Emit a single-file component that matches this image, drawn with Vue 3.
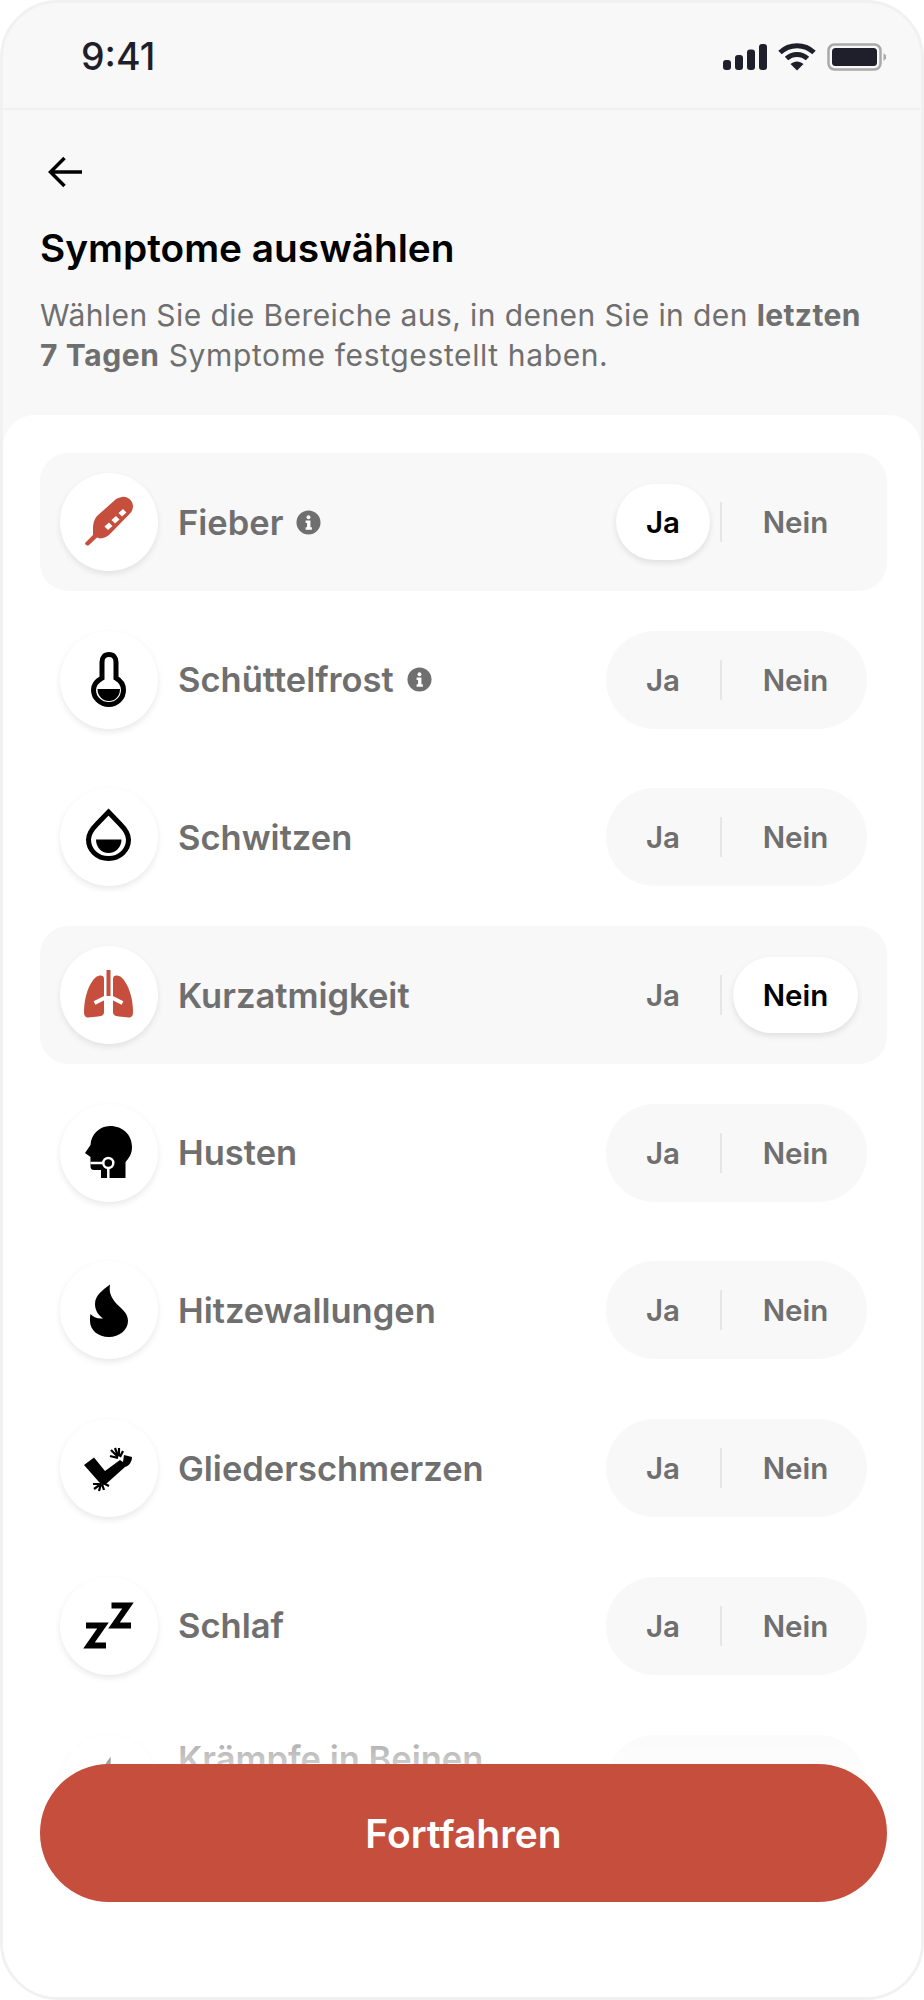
<template>
  <div class="screen">
    <header class="status">
      <span class="time">9:41</span>
      <div class="status-icons">
        <svg width="44" height="26" viewBox="0 0 44 26">
          <rect x="0" y="16" width="8" height="10" rx="3" />
          <rect x="12" y="11" width="8" height="15" rx="3" />
          <rect x="24" y="5.5" width="8" height="20.5" rx="3" />
          <rect x="36" y="0" width="8" height="26" rx="3" />
        </svg>
        <svg width="38" height="28" viewBox="0 0 38 28">
          <path d="M2 9.5C11.5 .5 26.5 .5 36 9.5" class="wifi" />
          <path d="M8.5 15.5C14.5 10 23.5 10 29.5 15.5" class="wifi" />
          <path d="M12.5 21L19 27.5L25.5 21C21.5 17.5 16.5 17.5 12.5 21Z" />
        </svg>
        <svg width="60" height="28" viewBox="0 0 60 28">
          <rect x="1.5" y="1.5" width="52" height="25" rx="6" fill="none" stroke="#a9a9ab" stroke-width="2.5" />
          <rect x="5" y="5" width="45" height="18" rx="3.5" />
          <path d="M56.5 10L59 12.5V15.5L56.5 18Z" fill="#a9a9ab" />
        </svg>
      </div>
    </header>

    <section class="intro">
      <svg class="back" width="36" height="32" viewBox="0 0 36 32">
        <path d="M34 16H3M16.5 2L2.5 16L16.5 30" />
      </svg>
      <h1>Symptome auswählen</h1>
      <p>
        <span class="line-one">Wählen Sie die Bereiche aus, in denen Sie in den <b>letzten</b></span>
        <span class="line-two"><b>7 Tagen</b> Symptome festgestellt haben.</span>
      </p>
    </section>

    <main class="sheet">
      <div
        v-for="item in symptoms"
        :key="item.label"
        :class="['row', { answered: item.answer }]"
      >
        <span class="bubble">
          <svg width="60" height="60" viewBox="0 0 60 60" :class="item.answer ? 'accent' : 'plain'">
            <template v-if="item.icon === 'fever'">
              <path d="M43 5C48.5 4 54 9 54 14C54 17 53 19.5 51 21.5L32 41C29 44 25 46.5 21 46.5L18 45.5L10 53C8 54.5 5 52.5 6.5 50.5L14 43V36C14 31.5 15 27.5 18 24L36 8C38 6 40.5 5.5 43 5Z" />
              <path class="cut" d="M25.5 34.5L30 30.5L33.5 34L29 38ZM32.5 28L37 24L40.500 27.5L36 31.5ZM39.500 21L44 17L47.500 20.5L43 24.5Z" />
            </template>
            <template v-else-if="item.icon === 'chills'">
              <path class="line" d="M23 28V12C23 7.5 25.5 4.5 30 4.5C34.5 4.5 37 7.5 37 12V28C41.5 30.5 44.5 35 44.5 40C44.5 48 38 54.5 29.8 54.5C21.5 54.5 14.5 48 14.5 40C14.5 35 18.5 30.5 23 28Z" />
              <path d="M18.5 39H41C41 46.5 36 51 29.8 51C24 51 18.5 46.5 18.5 39Z" />
            </template>
            <template v-else-if="item.icon === 'sweat'">
              <path class="line" d="M29.5 5L41 17C46 22 49.5 27 49.5 32.5C49.5 43 41 51.5 29.5 51.5C18 51.5 9.5 43 9.5 32.5C9.5 27 13 22 18 17Z" />
              <path d="M17 32.5H42.5C42.5 40 37 46 29.5 46C22 46 17 40 17 32.5Z" />
            </template>
            <template v-else-if="item.icon === 'lungs'">
              <path d="M25 14V47C25 50 23 51 19 51.5L9 52.5C6 52.5 5 50 5 47C5 32 10 18 17 12C21 9.5 25 10 25 14Z" />
              <path d="M34 14V47C34 50 36 51 40 51.5L50 52.5C53 52.5 54 50 54 47C54 32 49 18 42 12C38 9.5 34 10 34 14Z" />
              <path class="gap" d="M29.5 31L15.5 38M29.5 31L43.5 38" />
              <rect x="27.5" y="5" width="4" height="26" />
            </template>
            <template v-else-if="item.icon === 'cough'">
              <path d="M31 3C44 3 53 12 53 24C53 31 50 35 46.5 39V55H22V47H15C12.5 47 11.5 45.5 11.5 43V34L6 30L11.5 22C12 12 20 3 31 3Z" />
              <path class="gap" d="M11.5 40H25M29.3 45V55" />
              <circle class="hole" cx="29.3" cy="40" r="5" />
            </template>
            <template v-else-if="item.icon === 'heat'">
              <path d="M31 4.5C30 12 31.5 16 36 22C41 28 49 32 49 41C49 50 40 57 30 57C19 57 11 50 11 41C11 38 11 36 11.5 34C14 37 18 39 24 38.5C19 35 16 30 16 24C16 15 24 10 31 4.5Z" />
            </template>
            <template v-else-if="item.icon === 'limb'">
              <path d="M5 27L15 19.5L26 33L41 22L44 24L45 17L53 19C53 24 50 28 46 29L27 46C24 47 22 46 20 44Z" />
              <path class="burst" d="M39 20L31 18M39 19L32 12M39 18L36 10M40 18L40 10M41 19L44 13M22 46L14 46M22 46L15 51M22 46L20 53M23 46L25 52M24 45L30 48" />
            </template>
            <template v-else-if="item.icon === 'sleep'">
              <path class="z" d="M7 29.5H24L10 49.5H27M32.5 9.5H49L35 29.5H52" />
            </template>
            <template v-else-if="item.icon === 'cramp'">
              <path d="M31.7 2.7V30H20L27 9Z" />
            </template>
          </svg>
        </span>
        <span :class="['label', { clipped: item.icon === 'cramp' }]">{{ item.label }}</span>
        <svg v-if="item.info" class="info" width="25" height="25" viewBox="0 0 26 26">
          <circle cx="13" cy="13" r="12.5" fill="#6f6f6f" />
          <circle cx="13" cy="7.5" r="2" fill="#fff" />
          <path d="M10 11H15V18H16.5V20.5H10V18H11.5V13.5H10Z" fill="#fff" />
        </svg>
        <div class="toggle">
          <span :class="['opt', 'ja', { on: item.answer === 'ja' }]">Ja</span>
          <i class="divider"></i>
          <span :class="['opt', 'nein', { on: item.answer === 'nein' }]">Nein</span>
        </div>
      </div>

      <div class="footer">
        <button class="continue">Fortfahren</button>
      </div>
    </main>
  </div>
</template>

<script setup>
const symptoms = [
  { label: 'Fieber', icon: 'fever', info: true, answer: 'ja' },
  { label: 'Schüttelfrost', icon: 'chills', info: true },
  { label: 'Schwitzen', icon: 'sweat' },
  { label: 'Kurzatmigkeit', icon: 'lungs', answer: 'nein' },
  { label: 'Husten', icon: 'cough' },
  { label: 'Hitzewallungen', icon: 'heat' },
  { label: 'Gliederschmerzen', icon: 'limb' },
  { label: 'Schlaf', icon: 'sleep' },
  { label: 'Krämpfe in Beinen', icon: 'cramp' },
];
</script>

<style>
html, body { margin: 0; background: #fff; }
</style>

<style scoped>
.screen {
  box-sizing: border-box;
  width: 924px;
  height: 2000px;
  overflow: hidden;
  font-family: Inter, "Liberation Sans", sans-serif;
  background: #f8f8f8;
  border: 3px solid #f1f1f1;
  border-radius: 58px;
}
.status {
  height: 107px;
  padding: 2px 34px 0 78px;
  display: flex;
  align-items: center;
  justify-content: space-between;
  border-bottom: 2px solid #f0f0f0;
  box-sizing: border-box;
  color: #1f1f2b;
  fill: #1f1f2b;
}
.time {
  font-size: 37.5px;
  font-weight: 500;
}
.status-icons {
  display: flex;
  align-items: center;
  gap: 11px;
}
.wifi {
  fill: none;
  stroke: #1f1f2b;
  stroke-width: 5;
}
.intro {
  padding: 46px 34px 0 37px;
  height: 305px;
  box-sizing: border-box;
}
.back {
  display: block;
  margin-left: 8px;
}
.back path {
  fill: none;
  stroke: #000;
  stroke-width: 3.5;
}
h1 {
  margin: 36px 0 0;
  font-size: 38.8px;
  line-height: 48px;
  font-weight: 600;
  color: #000;
}
p {
  margin: 23px 0 0;
  font-size: 30px;
  line-height: 40px;
  color: #6f6f6f;
}
.line-one,
.line-two {
  display: block;
  white-space: nowrap;
}
.line-one { letter-spacing: 0.4px; }
.line-two { letter-spacing: 0.62px; }
.sheet {
  background: #fff;
  border-radius: 32px 32px 0 0;
  height: 1582px;
  box-sizing: border-box;
  padding: 38px 34px 0 37px;
  position: relative;
  display: flex;
  flex-direction: column;
  gap: 19.7px;
}
.row {
  flex: none;
  height: 138px;
  box-sizing: border-box;
  padding: 20px;
  display: flex;
  align-items: center;
  border-radius: 28px;
}
.row.answered { background: #f8f8f8; }
.bubble {
  width: 98px;
  height: 98px;
  flex: none;
  display: flex;
  align-items: center;
  justify-content: center;
  background: #fff;
  border-radius: 50%;
  box-shadow: 0 3px 6px rgba(0, 0, 0, 0.09);
}
.plain { fill: #000; }
.accent { fill: #c54e3c; }
.line {
  fill: none;
  stroke: #000;
  stroke-width: 5;
}
.cut { fill: #fff; }
.gap {
  fill: none;
  stroke: #fff;
  stroke-width: 2.5;
}
.accent .gap { stroke-width: 4; }
.hole {
  fill: #000;
  stroke: #fff;
  stroke-width: 2.5;
}
.burst {
  fill: none;
  stroke: #000;
  stroke-width: 2.2;
}
.z {
  fill: none;
  stroke: #000;
  stroke-width: 6;
}
.label {
  margin-left: 20px;
  font-size: 34.5px;
  font-weight: 600;
  color: #6f6f6f;
}
.label.clipped { padding-bottom: 50px; }
.info { margin-left: 13px; }
.toggle {
  margin-left: auto;
  width: 261px;
  height: 98px;
  flex: none;
  display: flex;
  align-items: center;
  border-radius: 49px;
  background: #f8f8f8;
  font-size: 29.5px;
  font-weight: 600;
  color: #6f6f6f;
}
.opt {
  height: 76px;
  display: flex;
  align-items: center;
  justify-content: center;
  border-radius: 38px;
}
.ja {
  width: 94px;
  margin-left: 10px;
}
.nein {
  width: 125px;
  margin-left: 11px;
}
.opt.on {
  background: #fff;
  color: #000;
  box-shadow: 0 3px 6px rgba(0, 0, 0, 0.1);
}
.divider {
  width: 2px;
  height: 40px;
  margin-left: 10px;
  background: #e6e6e6;
}
.footer {
  position: absolute;
  left: 0;
  right: 0;
  top: 1276px;
  bottom: 0;
  box-sizing: border-box;
  padding: 73px 34px 0 37px;
  background: linear-gradient(rgba(255, 255, 255, 0), rgba(255, 255, 255, 0.65) 73px, #fff 110px);
}
.continue {
  display: block;
  width: 100%;
  height: 138px;
  border: 0;
  border-radius: 69px;
  background: #c54e3c;
  color: #fff;
  font: 600 39px Inter, "Liberation Sans", sans-serif;
}
</style>
